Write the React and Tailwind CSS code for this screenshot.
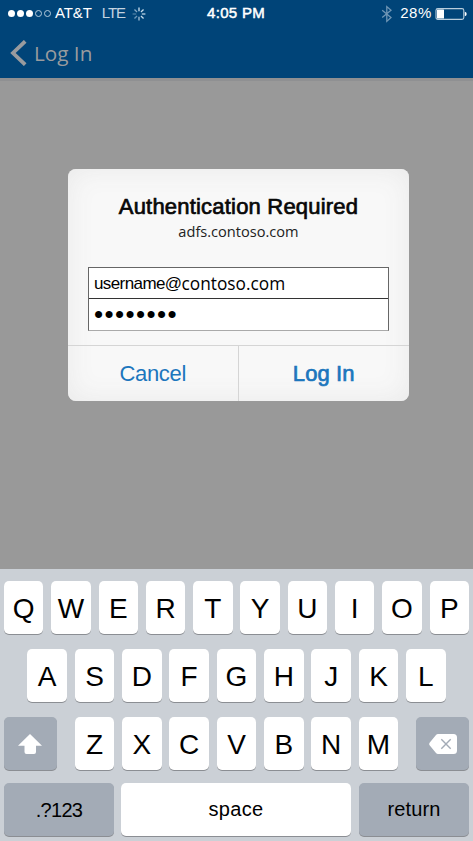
import React from "react";

const letterShadow = "shadow-[0_1px_0_#8b8e93]";
const keyBase = `flex h-[53px] items-center justify-center rounded-[5px] ${letterShadow}`;

function Letter({ children }) {
  return (
    <div className={`${keyBase} w-[39.5px] bg-white pt-[2px] text-[28px] leading-none`}>
      <span>{children}</span>
    </div>
  );
}

function Row({ letters }) {
  return (
    <div className="flex gap-[7.85px]">
      {letters.split("").map((l) => (
        <Letter key={l}>{l}</Letter>
      ))}
    </div>
  );
}

function Spinner() {
  const opacities = [0.95, 0.9, 0.85, 0.9, 0.75, 0.5, 0.35, 0.6];
  return (
    <svg width="14" height="14" viewBox="-7 -7 14 14" className="ml-[4px]">
      {opacities.map((o, i) => (
        <line key={i} x1="0" y1="-2.8" x2="0" y2="-6.4" stroke="#dcecf8" strokeWidth="1.3" opacity={o} transform={`rotate(${i * 45})`} />
      ))}
    </svg>
  );
}

function StatusBar() {
  return (
    <div className="grid h-[27px] grid-cols-[1fr_auto_1fr] items-center pr-[6px] pl-2 text-white">
      <div className="flex items-center">
        <div className="flex gap-[2px]">
          {[1, 1, 1, 0, 0].map((f, i) => (
            <span key={i} className={f ? "size-[7px] rounded-full bg-white" : "size-[7px] rounded-full border border-[#b5cbdc]"} />
          ))}
        </div>
        <span className="ml-[4px] text-[15px] tracking-[-0.1px]">AT&amp;T</span>
        <span className="ml-[10px] text-[15px] tracking-[-1.1px] text-[#c3d3e0]">LTE</span>
        <span className="ml-[3px] flex"><Spinner /></span>
      </div>
      <div className="mr-[3px] text-[15px] tracking-[0.3px] [-webkit-text-stroke:0.5px_white]">4:05 PM</div>
      <div className="flex items-center justify-end">
        <svg width="12" height="18" viewBox="0 0 12 18" fill="none" stroke="#6f96b5" strokeWidth="1.3">
          <path d="M1.2 5.2 L10 12.6 L5.8 16.4 V1.6 L10 5.2 L1.2 12.6" />
        </svg>
        <span className="ml-[7px] text-[15px] tracking-[0.6px]">28%</span>
        <svg width="32" height="12" viewBox="0 0 32 12" className="ml-[3px]">
          <rect x="1" y="0.6" width="27.8" height="10.8" rx="1.8" fill="none" stroke="#b9cddc" strokeWidth="1.1" />
          <rect x="2" y="1.4" width="7" height="9.2" rx="0.6" fill="#fff" />
          <path d="M29.8 3.7 Q31.7 4 31.7 6 Q31.7 8 29.8 8.3Z" fill="#fff" />
        </svg>
      </div>
    </div>
  );
}

function Header() {
  return (
    <header className="h-[78px] bg-[#004478]">
      <StatusBar />
      <div className="flex h-[51px] items-center pl-[10px] text-[#999b9e]">
        <svg width="17" height="26" viewBox="0 0 17 26" fill="none" stroke="currentColor" strokeWidth="3.8">
          <path d="M15.2 1.3 L3 13 L15.2 24.7" />
        </svg>
        <span className="mt-[2px] ml-[7px] font-['Open_Sans','Noto_Sans',sans-serif] text-[20.7px] leading-none">Log In</span>
      </div>
    </header>
  );
}

function Dialog() {
  return (
    <section className="mt-[88px] ml-[68px] flex h-[232px] w-[341px] flex-col rounded-[8px] bg-[#f8f8f8] shadow-[inset_0_0_28px_#e9e9e9]">
      <h1 className="mt-[24px] text-center text-[22px] leading-[28px] tracking-[0.2px] text-[#080808] [-webkit-text-stroke:0.7px_#080808]">Authentication Required</h1>
      <p className="text-center font-['Open_Sans','Noto_Sans',sans-serif] text-[14.6px] leading-[20px] text-[#222]">adfs.contoso.com</p>
      <div className="mx-5 mt-[26px] border border-[#666] border-b-[#aaa] bg-white">
        <div className="flex h-[31px] items-center border-b border-[#333] pt-px pl-[5px] text-[17px] text-black">
          <span className="tracking-[-0.6px]">username@</span>
          <span className="font-['Open_Sans','Noto_Sans',sans-serif] text-[17.3px]">contoso.com</span>
        </div>
        <div className="flex h-[31px] items-center pb-px pl-[5px] text-[26px] leading-none tracking-[1.4px]">••••••••</div>
      </div>
      <div className="mt-auto grid h-[56px] grid-cols-2 border-t border-[#d5d5d5] text-center text-[22px] leading-[55px] text-[#1c76bd]">
        <div className="border-r border-[#d5d5d5] tracking-[-0.3px]">Cancel</div>
        <div className="tracking-[0.1px] [-webkit-text-stroke:0.7px_#1c76bd]">Log In</div>
      </div>
    </section>
  );
}

function Keyboard() {
  return (
    <div className="flex h-[272px] flex-col bg-[#cbd0d6] px-1 pt-3 text-black">
      <Row letters="QWERTYUIOP" />
      <div className="mt-[15px] flex justify-center">
        <Row letters="ASDFGHJKL" />
      </div>
      <div className="mt-[15px] flex justify-between">
        <div className={`${keyBase} w-[53px] bg-[#a3abb6]`}>
          <svg width="24" height="20" viewBox="0 0 24 20" fill="#fff" className="mr-px">
            <path d="M12 0 L24 11.7 H18 V18 Q18 20 16 20 H8.5 Q6.5 20 6.5 18 V11.7 H0Z" />
          </svg>
        </div>
        <Row letters="ZXCVBNM" />
        <div className={`${keyBase} w-[53px] bg-[#a3abb6]`}>
          <svg width="28" height="20" viewBox="0 0 28 20">
            <path d="M9 0 H24.5 Q28 0 28 3.5 V16.5 Q28 20 24.5 20 H9 Q7.8 20 7 19 L0.6 11.3 Q-0.2 10 0.6 8.7 L7 1 Q7.8 0 9 0Z" fill="#fff" />
            <path d="M12.3 5.3 L21.7 14.7 M21.7 5.3 L12.3 14.7" stroke="#a3abb6" strokeWidth="1.4" />
          </svg>
        </div>
      </div>
      <div className="mt-[13px] flex gap-[7px] text-[20px]">
        <div className={`${keyBase} w-[110px] bg-[#a3abb6] tracking-[-0.7px]`}>.?123</div>
        <div className={`${keyBase} w-[230px] bg-white pb-[2px] tracking-[0.3px]`}>space</div>
        <div className={`${keyBase} ml-px w-[110px] bg-[#a3abb6] pb-[2px] tracking-[0.1px]`}>return</div>
      </div>
    </div>
  );
}

export default function App() {
  return (
    <div className="flex h-[841px] w-[473px] flex-col overflow-hidden bg-[#999] font-['Liberation_Sans',Arial,sans-serif]">
      <Header />
      <main className="h-[491px] border-t-[3px] border-[#8f9092]">
        <Dialog />
      </main>
      <Keyboard />
    </div>
  );
}
